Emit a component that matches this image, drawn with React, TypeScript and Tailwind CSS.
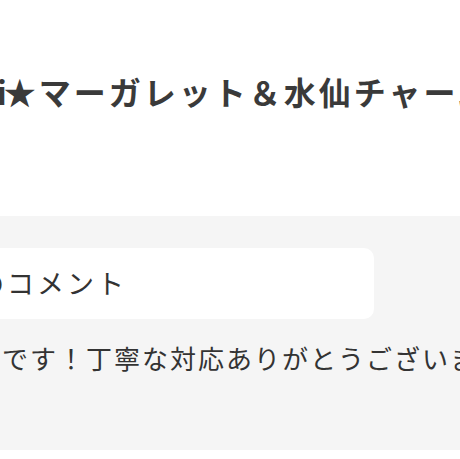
export default function App() {
  return (
    <div className="w-[460px] h-[459px] overflow-hidden bg-white font-['Noto_Sans_CJK_JP','Noto_Sans',sans-serif] text-[#333]">
      <header className="h-[216px] pt-[70px]">
        <h1 className="whitespace-nowrap ml-[-3px] text-[32px] leading-[42px] font-bold tracking-[3px] text-[#3a3a3a]">
          <span className="mr-[-6px]">i</span>★マーガレット＆水仙チャーム
        </h1>
      </header>
      <section className="h-[234px] bg-[#f5f5f5] pt-[32px]">
        <div className="w-[400px] ml-[-26px] h-[71px] rounded-[10px] bg-white flex items-center pl-[3px]">
          <span className="whitespace-nowrap text-[27px] tracking-[3px] text-[#333]">のコメント</span>
        </div>
        <p className="mt-[22px] ml-[-26px] whitespace-nowrap text-[26px] leading-[34px] tracking-[2px] text-[#333]">
          高です！丁寧な対応ありがとうございました
        </p>
      </section>
    </div>
  );
}
